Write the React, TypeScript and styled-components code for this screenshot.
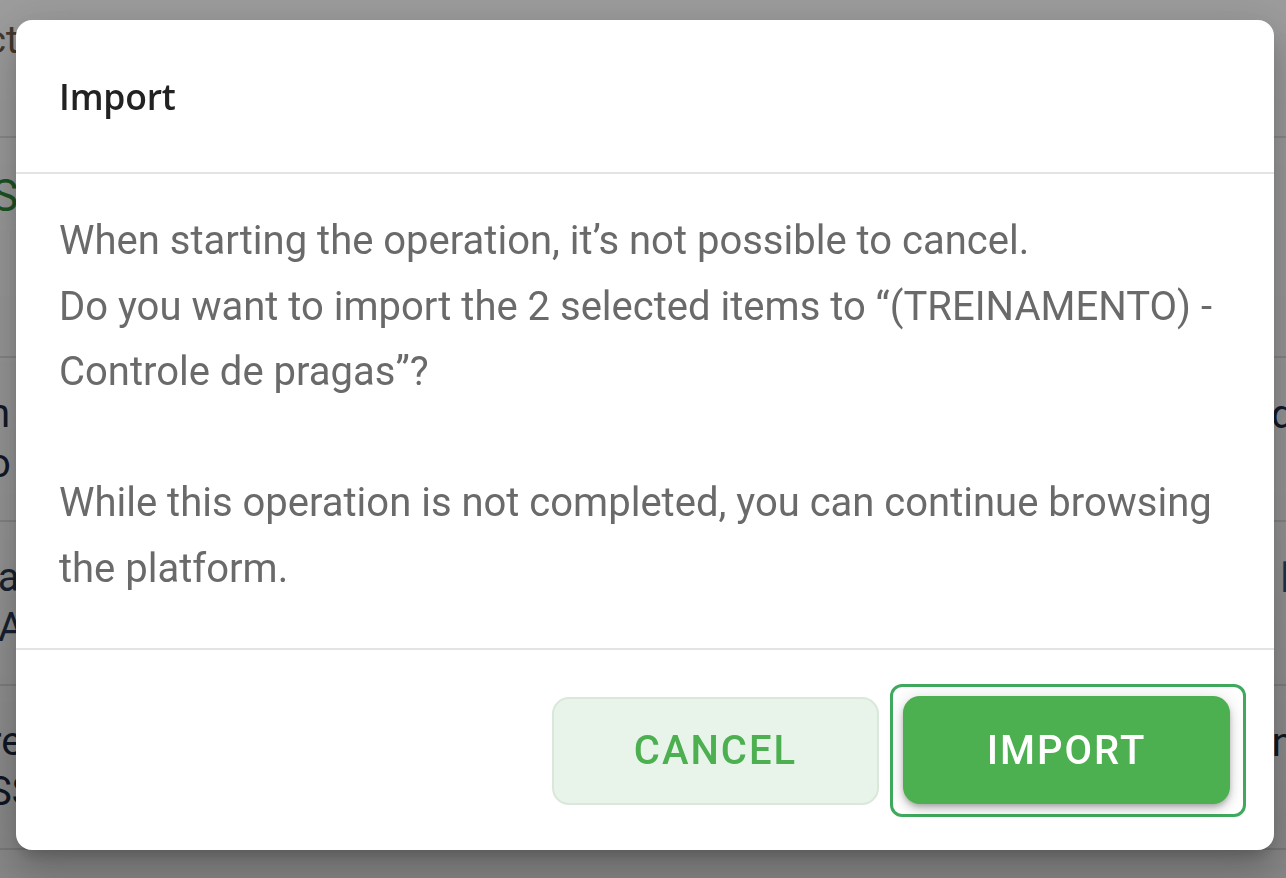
import React from "react";
import styled, { createGlobalStyle } from "styled-components";

const Global = createGlobalStyle`
  html, body { margin: 0; padding: 0; }
  body { width: 1286px; height: 878px; overflow: hidden; background: #ffffff; font-family: Roboto, "Liberation Sans", sans-serif; }
  #root { width: 1286px; height: 878px; }
`;

const Page = styled.div`
  width: 1286px;
  height: 878px;
  background: #ffffff;
  overflow: hidden;
  display: flex;
  flex-direction: column;
`;

const TopBar = styled.div`
  height: 138px;
  border-bottom: 2px solid #e2e2e2;
  box-sizing: border-box;
  padding-top: 18px;
  font-size: 38px;
  color: #6b5a4a;
  white-space: nowrap;
  margin-left: -14px;
`;

const Heading = styled.div`
  height: 220px;
  border-bottom: 2px solid #e2e2e2;
  box-sizing: border-box;
  font-size: 44px;
  color: #2e8b3a;
  margin-left: -8px;
  line-height: 1;
  padding-top: 36px;
`;

const Row = styled.div`
  height: 164px;
  border-bottom: 2px solid #e2e2e2;
  box-sizing: border-box;
  display: flex;
  justify-content: space-between;
  align-items: center;
  font-size: 40px;
  line-height: 50px;
  white-space: nowrap;
`;

const Cell = styled.div<{ $align?: "left" | "right"; $tone?: string }>`
  color: ${(p) => p.$tone ?? "#1d2b44"};
  text-align: ${(p) => p.$align ?? "left"};
  margin: ${(p) => (p.$align === "right" ? "-48px -30px 0 0" : "0 0 0 -12px")};
`;

const Overlay = styled.div`
  position: fixed;
  inset: 0;
  background: linear-gradient(180deg, rgba(0, 0, 0, 0.39) 0%, rgba(0, 0, 0, 0.42) 60%, rgba(0, 0, 0, 0.47) 100%);
  display: flex;
  align-items: flex-start;
  justify-content: flex-start;
  padding: 20px 12px 28px 16px;
  box-sizing: border-box;
`;

const Dialog = styled.div`
  width: 1258px;
  background: #ffffff;
  border-radius: 16px;
  display: flex;
  flex-direction: column;
  box-shadow: 0 11px 15px -7px rgba(0, 0, 0, 0.2), 0 24px 38px 3px rgba(0, 0, 0, 0.14),
    0 9px 46px 8px rgba(0, 0, 0, 0.12);
  overflow: hidden;
`;

const Header = styled.div`
  height: 154px;
  padding: 0 43px;
  display: flex;
  align-items: center;
  box-sizing: border-box;
  border-bottom: 2px solid #e3e3e3;
`;

const Title = styled.h2`
  margin: 0;
  font-family: "Open Sans", "Noto Sans", sans-serif;
  font-weight: 600;
  font-size: 35.5px;
  color: #222222;
  letter-spacing: -0.2px;
`;

const Body = styled.div`
  padding: 34px 43px 47px;
  border-bottom: 2px solid #e3e3e3;
`;

const Paragraph = styled.p`
  margin: 0;
  font-family: Roboto, "Liberation Sans", sans-serif;
  font-size: 40px;
  line-height: 65.5px;
  color: #6a6a6a;
`;

const Footer = styled.div`
  display: flex;
  justify-content: flex-end;
  align-items: center;
  gap: 11px;
  padding: 34px 28px 33px;
`;

const Button = styled.button<{ $variant: "soft" | "solid" }>`
  width: 327px;
  height: 108px;
  border-radius: 17px;
  font-family: Roboto, "Liberation Sans", sans-serif;
  font-weight: 500;
  font-size: 40px;
  letter-spacing: 2px;
  text-transform: uppercase;
  cursor: pointer;
  box-sizing: border-box;
  ${(p) =>
    p.$variant === "soft"
      ? `
    background: #e8f4ea;
    color: #4caf50;
    border: 2px solid #d9e8db;
  `
      : `
    background: #4caf50;
    color: #ffffff;
    border: none;
    box-shadow: 0 3px 5px -1px rgba(0,0,0,0.2), 0 6px 10px 0 rgba(0,0,0,0.14), 0 1px 18px 0 rgba(0,0,0,0.12);
  `}
`;

const FocusFrame = styled.div`
  border: 3px solid #3faa5e;
  border-radius: 12px;
  padding: 9px 13px 10px 10px;
  display: flex;
`;

export default function App() {
  return (
    <>
      <Global />
      <Page>
        <TopBar>ct</TopBar>
        <Heading>S</Heading>
        <Row>
          <Cell>
            n
            <br />
            o
          </Cell>
          <Cell $align="right">dd</Cell>
        </Row>
        <Row>
          <Cell $tone="#2b3a55">
            ia
            <br />
            &nbsp;A
          </Cell>
          <Cell $align="right" $tone="#2f5d8a">
            lA
          </Cell>
        </Row>
        <Row>
          <Cell>
            re
            <br />
            SS
          </Cell>
          <Cell $align="right">nn</Cell>
        </Row>
      </Page>
      <Overlay>
        <Dialog role="dialog" aria-labelledby="import-title">
          <Header>
            <Title id="import-title">Import</Title>
          </Header>
          <Body>
            <Paragraph>
              When starting the operation, it’s not possible to cancel.
              <br />
              Do you want to import the 2 selected items to “(TREINAMENTO) - Controle de pragas”?
              <br />
              <br />
              While this operation is not completed, you can continue browsing the platform.
            </Paragraph>
          </Body>
          <Footer>
            <Button $variant="soft">Cancel</Button>
            <FocusFrame>
              <Button $variant="solid">Import</Button>
            </FocusFrame>
          </Footer>
        </Dialog>
      </Overlay>
    </>
  );
}
